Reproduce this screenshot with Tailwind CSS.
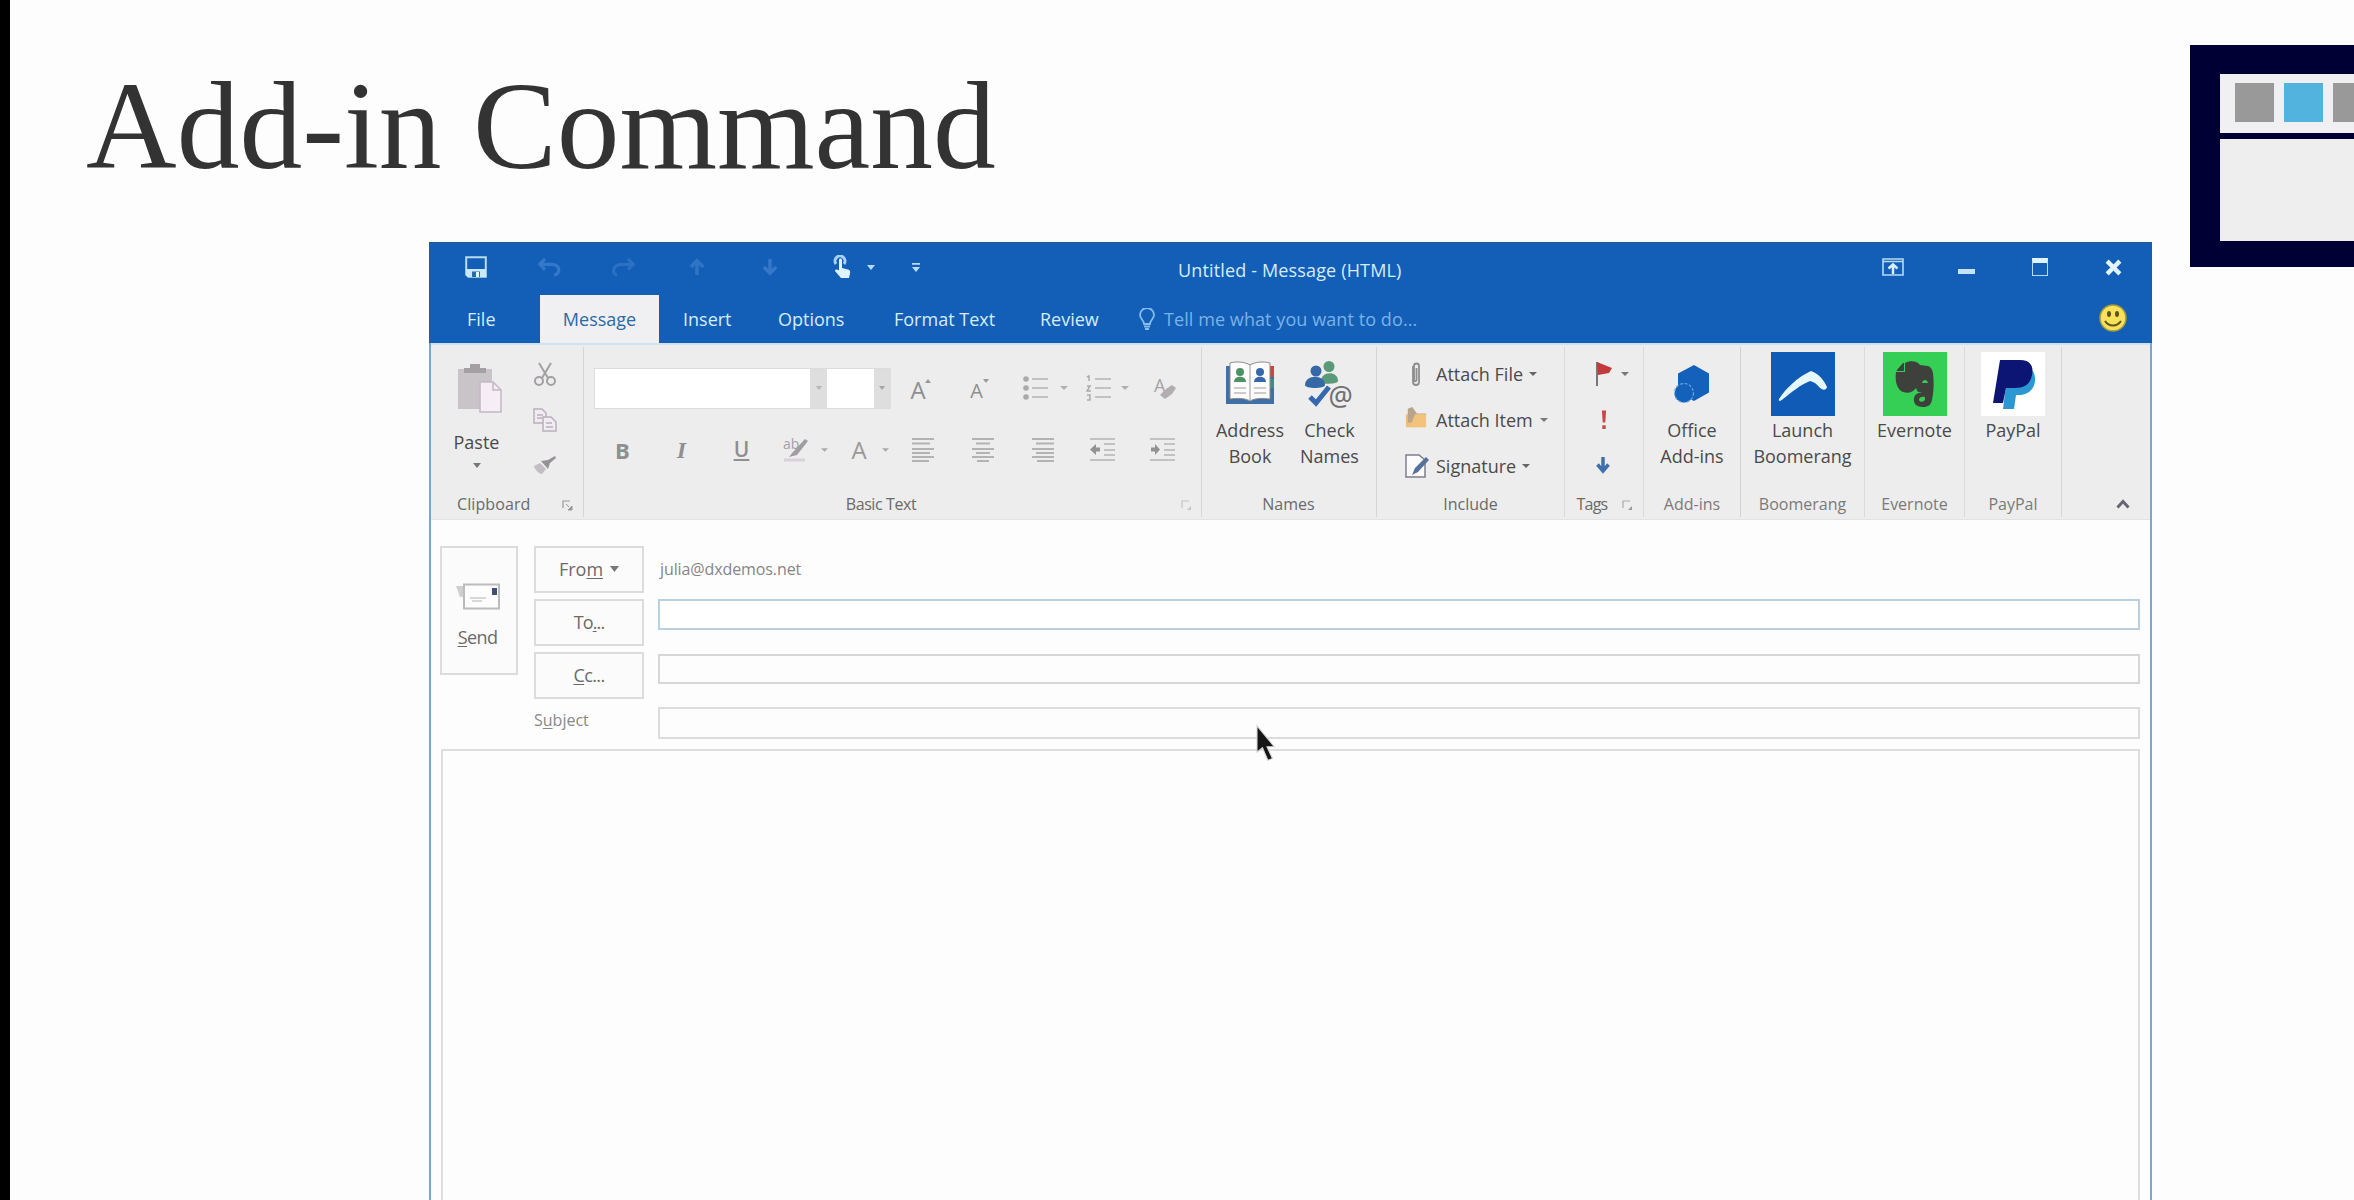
<!DOCTYPE html>
<html lang="en">
<head>
<meta charset="utf-8">
<title>Add-in Command</title>
<script src="https://cdn.jsdelivr.net/npm/@tailwindcss/browser@4"></script>
</head>
<body class="flex h-[1200px] w-[2354px] overflow-hidden bg-[#fdfdfd] font-['Open_Sans','Noto_Sans',sans-serif] text-lg leading-none text-[#4a4a4a]">
<div class="w-[10px] shrink-0 bg-black"></div>
<main class="flex grow flex-col">
  <!-- Slide heading -->
  <header class="flex h-[242px] shrink-0 items-start justify-between">
    <h1 class="mt-[62px] ml-[76px] whitespace-nowrap font-['Liberation_Serif',serif] text-[125.5px] leading-[128px] text-[#333]">Add-in Command</h1>
    <div class="mt-[45px] h-[222px] w-[164px] shrink-0 bg-[#010035] pt-[29px] pl-[30px]">
      <div class="flex h-[59px] gap-[10px] overflow-hidden bg-[#f0eff2] pt-[9px] pl-[15px]">
        <div class="size-[39px] shrink-0 bg-[#999]"></div>
        <div class="size-[39px] shrink-0 bg-[#52b3df]"></div>
        <div class="size-[39px] shrink-0 bg-[#999]"></div>
      </div>
      <div class="mt-[6px] h-[102px] bg-[#eee]"></div>
    </div>
  </header>

  <!-- Message window -->
  <section class="ml-[419px] flex w-[1723px] grow flex-col border-x-2 border-[#7ba6cd]">
    <div class="-mx-[2px] shrink-0 border-t border-[#2d567f] bg-[#135fb7] px-[2px] text-[#d6ecfb]">
      <!-- Title bar -->
      <div class="flex h-[52px] items-center pb-[4px]">
        <div class="flex w-[747px] items-center pl-[8px]">
          <div class="flex w-[74px] justify-center"><svg class="h-[22px] w-[22px]" viewBox="0 0 22 22"><path d="M1.2 1.2H20.8V20.8H3.5L1.2 18.5Z" fill="none" stroke="#b9dcf3" stroke-width="2"/><path d="M1 13H21V21H3L1 19Z" fill="#c9e8f8"/><path d="M7 15.5h8V21H7z" fill="#2a6aae"/><path d="M11 16h3v5h-3z" fill="#e3f4fc"/></svg></div>
          <div class="flex w-[73px] justify-center"><svg class="h-[20px] w-[25px]" viewBox="0 0 28 22" fill="none" stroke="#3577c8" stroke-width="3.500"><path d="M9 2 3 8l6 6M4 8h13c9 0 10 11 2 12"/></svg></div>
          <div class="flex w-[74px] justify-center"><svg class="h-[20px] w-[25px]" viewBox="0 0 28 22" fill="none" stroke="#2b70c3" stroke-width="3.500"><path d="M19 2l6 6-6 6M24 8H12C2 8 0 19 7 20"/></svg></div>
          <div class="flex w-[73px] justify-center"><svg class="h-[18px] w-[16px]" viewBox="0 0 18 20" fill="none" stroke="#3074c6" stroke-width="4"><path d="M9 19V3M2 10l7-7 7 7"/></svg></div>
          <div class="flex w-[74px] justify-center"><svg class="h-[18px] w-[16px]" viewBox="0 0 18 20" fill="none" stroke="#3577c8" stroke-width="4"><path d="M9 1v16M2 10l7 7 7-7"/></svg></div>
          <div class="flex w-[70px] justify-center"><svg class="h-[24px] w-[18px]" viewBox="0 0 18 24"><path d="M3 9a5 5 0 1 1 8 0" fill="none" stroke="#a9d2ef" stroke-width="3"/><path d="M6 5c0-2 3-2 3 0v8l6 1.500c2 .5 2.500 2 2 4l-1 4.500H8L2 16c0-2 2-2 4-.5Z" fill="#dff3fd"/></svg></div>
          <svg class="-ml-[10px] h-[5px] w-[8px]" viewBox="0 0 8 5"><path d="M0 0h8L4 5Z" fill="#b9dcf5"/></svg>
          <svg class="ml-[37px] h-[9px] w-[8px]" viewBox="0 0 9 10"><path d="M0 0h9v2H0zM0 4.500h9L4.500 10Z" fill="#b9dcf5"/></svg>
        </div>
        <div class="mt-[5px] tracking-[0.15px]">Untitled - Message (HTML)</div>
        <div class="ml-auto flex">
          <div class="flex w-[74px] items-center justify-center"><svg class="h-[18px] w-[22px]" viewBox="0 0 22 18" fill="none" stroke="#b5daf4" stroke-width="1.600"><path d="M1 1h20v16H1zM1 3.500h20"/><path d="M11 16V7M6.500 10.500 11 6.500l4.500 4" stroke="#d9f0fd" stroke-width="2.500"/></svg></div>
          <div class="flex w-[73px] items-center justify-center"><div class="mt-[8px] h-[5px] w-[17px] bg-[#c4e3f7]"></div></div>
          <div class="flex w-[74px] items-center justify-center"><div class="h-[18px] w-[16px] border-[1.5px] border-t-[5px] border-[#b5daf4] border-t-[#dff3fd]"></div></div>
          <div class="flex w-[73px] items-center justify-center"><svg class="h-[17px] w-[17px]" viewBox="0 0 16 16"><path d="M2 2l12 12M14 2 2 14" stroke="#e3f5fe" stroke-width="4"/></svg></div>
        </div>
      </div>
      <!-- Ribbon tabs -->
      <nav class="flex h-[48px] items-center whitespace-nowrap">
        <div class="w-[109px] pl-[36px]">File</div>
        <div class="flex h-full w-[119px] items-center justify-center bg-[#f0f0f2] text-[#2a6aa5]">Message</div>
        <div class="w-[95px] pl-[24px]">Insert</div>
        <div class="w-[115px] pl-[24px]">Options</div>
        <div class="w-[147px] pl-[25px]">Format Text</div>
        <div class="w-[123px] pl-[24px]">Review</div>
        <svg class="h-[22px] w-[16px]" viewBox="0 0 16 22" fill="none" stroke="#86bcec" stroke-width="1.800"><path d="M5 16c0-4-4-5-4-9a7 7 0 0 1 14 0c0 4-4 5-4 9ZM5 18.500h6M6 21h4"/></svg>
        <div class="ml-[9px] tracking-[0.08px] text-[#7ab2e6]">Tell me what you want to do...</div>
        <svg class="mr-[23px] mb-[3px] ml-auto h-[28px] w-[28px]" viewBox="0 0 28 28"><circle cx="14" cy="14" r="13" fill="#f7e25a" stroke="#a59a3c" stroke-width="1.500"/><ellipse cx="10" cy="10" rx="2" ry="3" fill="#5b5320"/><ellipse cx="18" cy="10" rx="2" ry="3" fill="#5b5320"/><path d="M6 17c4 6 12 6 16 0" fill="none" stroke="#5b5320" stroke-width="2"/></svg>
      </nav>
    </div>

    <!-- Ribbon -->
    <div class="flex h-[177px] shrink-0 border-t-2 border-b border-t-[#cfe2f4] border-b-[#e2e2e2] bg-[#ededed] py-[2px] text-center">
      <!-- Clipboard -->
      <div class="flex w-[153px] flex-col border-r border-[#d6d6d6]">
        <div class="flex h-[146px]">
          <div class="flex w-[91px] flex-col items-center pt-[16px]">
            <svg class="ml-[5px] h-[50px] w-[46px]" viewBox="0 0 46 50"><path d="M2 6h34v40H2z" fill="#c9c4c8"/><path d="M8 10V5h6V1h10v4h6v5Z" fill="#a39fa2"/><path d="M24 19h13l8 8v22H24z" fill="#f5eef5" stroke="#c5b7c5" stroke-width="1.500"/><path d="M37 19v8h8" fill="none" stroke="#c5b7c5" stroke-width="1.500"/></svg>
            <div class="mt-[20px]">Paste</div>
            <svg class="mt-[12px] h-[5px] w-[8px]" viewBox="0 0 8 5"><path d="M0 0h8L4 5Z" fill="#777"/></svg>
          </div>
          <div class="flex w-[46px] flex-col items-center pt-[15px]">
            <svg class="h-[24px] w-[22px]" viewBox="0 0 22 24" fill="none" stroke="#a3a0a3" stroke-width="2"><path d="M5 1l9 15M17 1 8 16"/><circle cx="5" cy="19" r="4"/><circle cx="17" cy="19" r="4"/></svg>
            <svg class="mt-[22px] h-[24px] w-[24px]" viewBox="0 0 24 24" fill="#f2ecf2" stroke="#b9b0b9" stroke-width="1.500"><path d="M1 1h8l4 4v10H1z"/><path d="M10 9h8l5 5v9H10z"/><path d="M4 7h6M4 10h5M13 15h6M13 19h7"/></svg>
            <svg class="mt-[23px] h-[20px] w-[24px]" viewBox="0 0 24 20"><path d="M1 11l6-3 6 6-4 5c-3 0-7-4-8-8Z" fill="#c3bec3"/><path d="M8 6l7-1 7-4 1 2-6 5-2 6Z" fill="#959295"/></svg>
          </div>
        </div>
        <div class="flex items-start pl-[26px] text-base leading-[26px] text-[#6a6a6a]"><span class="w-[85px] text-left tracking-[0.1px]">Clipboard</span><svg class="ml-[20px] mt-[9px] h-[11px] w-[11px]" viewBox="0 0 11 11"><path d="M1 8V1h7" fill="none" stroke="#999" stroke-width="1.200"/><path d="M4 4l3 3M10 6v4H6Z" fill="#999" stroke="#999"/></svg></div>
      </div>
      <!-- Basic Text -->
      <div class="flex w-[618px] flex-col border-r border-[#d6d6d6]">
        <div class="h-[146px] pl-[10px] text-[#8f8f8f]">
          <div class="flex h-[82px] items-center">
            <div class="flex h-[41px] w-[297px] border border-[#dcdcdc] bg-white">
              <div class="grow"></div>
              <div class="flex w-[17px] items-center justify-center bg-[#dedede]"><svg class="h-[4px] w-[6px]" viewBox="0 0 6 4"><path d="M0 0h6L3 4Z" fill="#b5b5b5"/></svg></div>
              <div class="w-[47px]"></div>
              <div class="flex w-[16px] items-center justify-center bg-[#dedede]"><svg class="h-[4px] w-[6px]" viewBox="0 0 6 4"><path d="M0 0h6L3 4Z" fill="#a5a5a5"/></svg></div>
            </div>
            <div class="flex w-[59px] items-center justify-center pt-[4px] text-[24px]">A<svg class="-ml-px mb-[18px] h-[4px] w-[6px]" viewBox="0 0 6 4"><path d="M0 4h6L3 0Z" fill="#999"/></svg></div>
            <div class="flex w-[59px] items-center justify-center pt-[6px] text-[20px]">A<svg class="mb-[20px] h-[4px] w-[6px]" viewBox="0 0 6 4"><path d="M0 0h6L3 4Z" fill="#999"/></svg></div>
            <svg class="ml-[14px] h-[26px] w-[26px]" viewBox="0 0 26 26"><g fill="#aaa"><circle cx="3" cy="4" r="2.800"/><circle cx="3" cy="13" r="2.800"/><circle cx="3" cy="22" r="2.800"/></g><path d="M9 4h16M9 13h16M9 22h16" stroke="#c2c2c2" stroke-width="2"/></svg>
            <svg class="ml-[11px] h-[4px] w-[8px]" viewBox="0 0 8 4"><path d="M0 0h8L4 4Z" fill="#b0b0b0"/></svg>
            <svg class="ml-[18px] h-[28px] w-[26px]" viewBox="0 0 26 28"><path d="M1 3l2-1v5M1 12h3l-3 5h4M1 21h3v5H1" fill="none" stroke="#aaa" stroke-width="1.500"/><path d="M9 5h16M9 14h16M9 23h16" stroke="#c2c2c2" stroke-width="2"/></svg>
            <svg class="ml-[9px] h-[4px] w-[8px]" viewBox="0 0 8 4"><path d="M0 0h8L4 4Z" fill="#b0b0b0"/></svg>
            <div class="relative ml-[25px] h-[24px] w-[22px] text-left text-[18px] leading-[18px] text-[#a5a5a5]">A<svg class="absolute top-[8px] left-[5px] h-[16px] w-[17px]" viewBox="0 0 17 16"><path d="M7 5l6-4 4 3-4 6-7 5-5-4Z" fill="#b1adb1"/></svg></div>
          </div>
          <div class="flex h-[41px] items-center">
            <div class="ml-[7px] flex w-[43px] justify-center text-[22px] font-bold">B</div>
            <div class="ml-[16px] w-[43px] font-['Liberation_Serif',serif] text-[24px] font-bold italic">I</div>
            <div class="ml-[17px] w-[43px] text-[21px] font-semibold underline underline-offset-2">U</div>
            <div class="relative ml-[20px] h-[24px] w-[26px] text-left text-[14px] leading-[12px] text-[#a5a0a5]">ab<svg class="absolute inset-0 h-[24px] w-[26px]" viewBox="0 0 26 24"><path d="M6 19 10 14 22 1l3 2-11 14Z" fill="#a09ca0"/><path d="M1 22h21" stroke="#dccfdc" stroke-width="3"/></svg></div>
            <svg class="ml-[12px] h-[4px] w-[7px]" viewBox="0 0 8 4"><path d="M0 0h8L4 4Z" fill="#aaa"/></svg>
            <div class="ml-[14px] w-[34px] text-[24px] text-[#999]">A</div>
            <svg class="ml-[6px] h-[4px] w-[7px]" viewBox="0 0 8 4"><path d="M0 0h8L4 4Z" fill="#aaa"/></svg>
            <svg class="ml-[23px] h-[25px] w-[22px]" viewBox="0 0 22 25" stroke="#b3b3b3" stroke-width="1.800"><path d="M0 2h22M0 6.500h18M0 12h22M0 16h18M0 20h22M0 24h17"/></svg>
            <svg class="ml-[38px] h-[25px] w-[22px]" viewBox="0 0 22 25" stroke="#b3b3b3" stroke-width="1.800"><path d="M0 2h22M4 6.500h14M0 12h22M4 16h14M0 20h22M5 24h12"/></svg>
            <svg class="ml-[38px] h-[25px] w-[22px]" viewBox="0 0 22 25" stroke="#b3b3b3" stroke-width="1.800"><path d="M0 2h22M4 6.500h18M0 12h22M4 16h18M0 20h22M5 24h17"/></svg>
            <svg class="ml-[36px] h-[25px] w-[25px]" viewBox="0 0 25 25"><path d="M0 2h25M14 7h11M14 13h11M14 18h11M0 23h25" stroke="#c2c2c2" stroke-width="1.800"/><path d="M0 12.500 6 7v3.500h4v4H6V18Z" fill="#929292"/></svg>
            <svg class="ml-[35px] h-[25px] w-[25px]" viewBox="0 0 25 25"><path d="M0 2h25M14 7h11M14 13h11M14 18h11M0 23h25" stroke="#c2c2c2" stroke-width="1.800"/><path d="M10 12.500 5 7v3.500H1v4h4V18Z" fill="#929292"/></svg>
          </div>
        </div>
        <div class="flex pl-[260px] text-base leading-[26px] text-[#6a6a6a]"><span class="w-[74px] whitespace-nowrap tracking-[-0.4px]">Basic Text</span><svg class="ml-[263px] mt-[9px] h-[11px] w-[11px] opacity-60" viewBox="0 0 11 11"><path d="M1 8V1h7" fill="none" stroke="#aaa" stroke-width="1.200"/><path d="M10 6v4H6Z" fill="#aaa"/></svg></div>
      </div>
      <!-- Names -->
      <div class="flex w-[175px] flex-col border-r border-[#d6d6d6] pl-px">
        <div class="flex h-[146px] justify-center pt-[14px] leading-[26px]">
          <div class="flex w-[80px] flex-col items-center">
            <svg class="h-[46px] w-[50px]" viewBox="0 0 50 46"><path d="M1 5h48v38H1z" fill="#3f6fa5"/><path d="M45 5h4v11h-4z" fill="#c8473f"/><path d="M45 18h4v9h-4z" fill="#3f8f7c"/><path d="M5 2c7-2 15-1 20 2 5-3 13-4 20-2v36c-7-1-15-1-20 2-5-3-13-3-20-2Z" fill="#fcfcfc" stroke="#8a8a8a"/><path d="M25 4v35" stroke="#999"/><g fill="#4c9163"><circle cx="15" cy="11" r="4"/><path d="M9 21c0-7 12-7 12 0Z"/></g><g fill="#3668aa"><circle cx="35" cy="11" r="4"/><path d="M29 21c0-7 12-7 12 0Z"/></g><path d="M9 27h12M9 32h12M29 27h12M29 32h12" stroke="#bbb" stroke-width="1.500"/></svg>
            <div class="mt-[10px]">Address<br>Book</div>
          </div>
          <div class="flex w-[79px] flex-col items-center">
            <div class="relative h-[50px] w-[50px]">
              <svg class="h-[50px] w-[50px]" viewBox="0 0 50 50"><g fill="#5a9a78"><circle cx="24" cy="5.500" r="5.500"/><path d="M16 21c-1-11 17-12 17-1 0 3-16 4-17 1Z"/></g><g fill="#3668a8"><circle cx="11" cy="10" r="5.500"/><path d="M0 24c0-11 20-11 20 0 0 4-20 4-20 0Z"/></g><path d="M5 36l6 6L24 26" fill="none" stroke="#3668b0" stroke-width="5"/></svg>
              <div class="absolute top-[21px] left-[24px] font-['Noto_Sans',sans-serif] text-[27px] leading-[27px] text-[#6f6f6f]">@</div>
            </div>
            <div class="mt-[6px]">Check<br>Names</div>
          </div>
        </div>
        <div class="pr-[2px] text-base leading-[26px] text-[#6a6a6a]">Names</div>
      </div>
      <!-- Include -->
      <div class="flex w-[188px] flex-col border-r border-[#dadada]">
        <div class="flex h-[146px] flex-col pt-[4px] pl-[28px]">
          <div class="flex h-[46px] items-center"><svg class="mr-[9px] h-[24px] w-[22px]" viewBox="0 0 22 24" fill="none" stroke="#8d8d8d" stroke-width="1.800"><path d="M8 4v16a3 3 0 0 0 6 0V4a2.500 2.500 0 0 0-5 0v14a1 1 0 0 0 2.500 0V6"/></svg>Attach File<svg class="ml-[6px] h-[4px] w-[8px]" viewBox="0 0 8 4"><path d="M0 0h8L4 4Z" fill="#666"/></svg></div>
          <div class="flex h-[46px] items-center"><svg class="mr-[9px] mb-[4px] h-[22px] w-[22px]" viewBox="0 0 22 24"><path d="M0 8h22v14H0z" fill="#f0bf73"/><path d="M2 2l5-2 5 7h10v3L12 17H2Z" fill="#b9a58c"/><path d="M10 8h12v14H4Z" fill="#f2c47b"/></svg>Attach Item<svg class="ml-[7px] h-[4px] w-[8px]" viewBox="0 0 8 4"><path d="M0 0h8L4 4Z" fill="#777"/></svg></div>
          <div class="flex h-[45px] items-center"><svg class="mr-[7px] h-[24px] w-[24px]" viewBox="0 0 24 24"><path d="M1 1h13l6 5v17H1z" fill="#fcfcfe" stroke="#7d7d8a" stroke-width="1.500"/><path d="M7 21l3-7L21 3l3 3-11 12Z" fill="#56719c"/></svg>Signature<svg class="ml-[6px] h-[4px] w-[8px]" viewBox="0 0 8 4"><path d="M0 0h8L4 4Z" fill="#666"/></svg></div>
        </div>
        <div class="text-base leading-[26px] text-[#6a6a6a]">Include</div>
      </div>
      <!-- Tags -->
      <div class="flex w-[79px] flex-col border-r border-[#dadada]">
        <div class="flex h-[146px] flex-col items-start pt-[14px] pl-[30px]">
          <div class="flex items-center"><svg class="h-[25px] w-[18px]" viewBox="0 0 18 25"><path d="M2 1v24" stroke="#777" stroke-width="2"/><path d="M2 1l15 6-3 5-11 2Z" fill="#c23a3a"/></svg><svg class="ml-[8px] h-[4px] w-[8px]" viewBox="0 0 8 4"><path d="M0 0h8L4 4Z" fill="#777"/></svg></div>
          <svg class="mt-[23px] ml-[6px] h-[22px] w-[6px]" viewBox="0 0 7 22"><path d="M1 0h5l-1 14H2ZM1.500 17h4v4.500h-4z" fill="#c6494c"/></svg>
          <svg class="mt-[26px] ml-[1px] h-[17px] w-[14px]" viewBox="0 0 14 17"><path d="M7 0v14M1.500 7.500 7 14l5.500-6.500" fill="none" stroke="#416fae" stroke-width="3.500"/></svg>
        </div>
        <div class="flex pl-[11px] text-base leading-[26px] text-[#6a6a6a]"><span class="w-[32px] tracking-[-0.8px]">Tags</span><svg class="ml-[14px] mt-[9px] h-[11px] w-[11px]" viewBox="0 0 11 11"><path d="M1 8V1h7" fill="none" stroke="#aaa" stroke-width="1.200"/><path d="M10 6v4H6Z" fill="#999"/></svg></div>
      </div>
      <!-- Add-ins -->
      <div class="flex w-[97px] flex-col border-r border-[#d2d2d2]">
        <div class="flex h-[146px] flex-col items-center pt-[18px] leading-[26px]">
          <svg class="h-[38px] w-[36px]" viewBox="0 0 36 38"><path d="M20 0l15 8.500v19L20 36 4 28V8.500Z" fill="#1461bb"/><circle cx="10" cy="28" r="9.500" fill="#1461bb" stroke="#6ca6e0" stroke-width="1.200" stroke-dasharray="3 1.500"/></svg>
          <div class="mt-[14px]">Office<br>Add-ins</div>
        </div>
        <div class="text-base leading-[26px] text-[#7a7a7a]">Add-ins</div>
      </div>
      <!-- Boomerang -->
      <div class="flex w-[124px] flex-col border-r border-[#dadada]">
        <div class="flex h-[146px] flex-col items-center pt-[5px] leading-[26px]">
          <svg class="h-[64px] w-[64px]" viewBox="0 0 64 64"><path d="M0 0h64v64H0z" fill="#0f5bb5"/><path d="M8 47c7-11 19-22 32-28 8 3 13 9 16 16-1 4-5 3-8 0-2-3-5-5-9-6-10 4-18 11-27 18-2 2-5 3-4 0Z" fill="#e6f8fd"/></svg>
          <div class="mt-[1px]">Launch<br>Boomerang</div>
        </div>
        <div class="text-base leading-[26px] text-[#7a7a7a]">Boomerang</div>
      </div>
      <!-- Evernote -->
      <div class="flex w-[100px] flex-col border-r border-[#dadada]">
        <div class="flex h-[146px] flex-col items-center pt-[5px] leading-[26px]">
          <svg class="h-[64px] w-[64px]" viewBox="0 0 64 64"><path d="M0 0h64v64H0z" fill="#36cf55"/><path d="M22 11c5-3 13-2 15 2l8 1c3 1 4 3 5 7 1 9 1 18-1 27-1 5-4 7-9 7-7 0-10-4-9-9 1-5 5-6 11-5v4c-4-1-6 1-6 3 1 3 6 2 6-1 0-4-2-7-6-7-2 0-2-2-3-4-3 5-10 6-15 3-5-4-6-12-5-19h9Z" fill="#3d403b"/><path d="M20.500 11v7.500H14Z" fill="#3d403b" stroke="#3d403b"/><path d="M39 31c1-4 5-4 6 0Z" fill="#36cf55"/></svg>
          <div class="mt-[1px]">Evernote</div>
        </div>
        <div class="text-base leading-[26px] text-[#7a7a7a]">Evernote</div>
      </div>
      <!-- PayPal -->
      <div class="flex w-[97px] flex-col border-r border-[#d6d6d6]">
        <div class="flex h-[146px] flex-col items-center pt-[5px] leading-[26px]">
          <svg class="h-[64px] w-[64px]" viewBox="0 0 64 64"><path d="M0 0h64v64H0z" fill="#fff"/><path d="M28 20l22-3c7 6 6 24-10 26h-5l-2 14H22l2-16Z" fill="#2b97d3"/><path d="M19 8h20c10 0 14 6 12 15-2 10-8 13-18 13h-8l-3 15H12Z" fill="#0c1574"/></svg>
          <div class="mt-[1px]">PayPal</div>
        </div>
        <div class="text-base leading-[26px] text-[#7a7a7a]">PayPal</div>
      </div>
      <div class="flex grow items-end justify-end pr-[20px] pb-[8px]"><svg class="h-[10px] w-[14px]" viewBox="0 0 14 10"><path d="M1.500 8.500 7 2.500l5.500 6" fill="none" stroke="#666673" stroke-width="3"/></svg></div>
    </div>

    <!-- Compose form -->
    <div class="flex shrink-0 items-start pt-[26px] pl-[9px] text-[#6a6a6a]">
      <div class="flex h-[129px] w-[78px] flex-col items-center border-2 border-[#dcdcdc] bg-[#fbfbfb] pt-[35px] pr-[3px]">
        <svg class="h-[27px] w-[44px]" viewBox="0 0 44 27"><path d="M0 3h9v11H4Z" fill="#cfcfcf"/><path d="M8 1.500h35v24H8z" fill="#fdfdfd" stroke="#bcbcbc" stroke-width="2"/><path d="M36 5h5v7h-5z" fill="#3f5075"/><path d="M14 15h16M16 18h10" stroke="#ccc" stroke-width="1.500"/></svg>
        <div class="mt-[18px] tracking-[-0.6px]"><span class="underline underline-offset-2">S</span>end</div>
      </div>
      <div class="ml-[16px] flex w-[110px] flex-col gap-[6px]">
        <div class="flex h-[47px] items-center justify-center border-2 border-[#dcdcdc] bg-[#fbfbfb] pb-[2px]">Fro<span class="underline underline-offset-2">m</span><svg class="ml-[7px] h-[6px] w-[9px]" viewBox="0 0 9 6"><path d="M0 0h9L4.500 6Z" fill="#777"/></svg></div>
        <div class="flex h-[47px] items-center justify-center border-2 border-[#dcdcdc] bg-[#fbfbfb] pb-[2px] tracking-[-0.9px]">To<span class="underline underline-offset-2">.</span>..</div>
        <div class="flex h-[47px] items-center justify-center border-2 border-[#dcdcdc] bg-[#fbfbfb] pb-[2px] tracking-[-0.6px]"><span class="underline underline-offset-2">C</span>c...</div>
        <div class="mt-[5px] text-base leading-[20px] text-[#888]">S<span class="underline underline-offset-2">u</span>bject</div>
      </div>
      <div class="ml-[14px] flex w-[1482px] flex-col">
        <div class="flex h-[53px] items-center pb-[7px] pl-[2px] text-base tracking-[-0.1px] text-[#858585]">julia@dxdemos.net</div>
        <div class="h-[31px] border-2 border-[#b9d0e2] bg-white"></div>
        <div class="mt-[24px] h-[30px] border-2 border-[#d6d6d6]"></div>
        <div class="mt-[23px] h-[32px] border-2 border-[#dcdcdc]"></div>
      </div>
    </div>
    <div class="mt-[10px] mr-[10px] ml-[10px] grow border-2 border-b-0 border-[#dedede]"></div>
  </section>
</main>
<!-- Mouse pointer -->
<svg class="absolute top-[724px] left-[1255px] h-[40px] w-[24px]" viewBox="0 0 26 44"><path d="M2 2v29l6-5 6 14 5-2-6-13h8Z" fill="#161616" stroke="#d5d5d5" stroke-width="1.200"/></svg>
</body>
</html>
